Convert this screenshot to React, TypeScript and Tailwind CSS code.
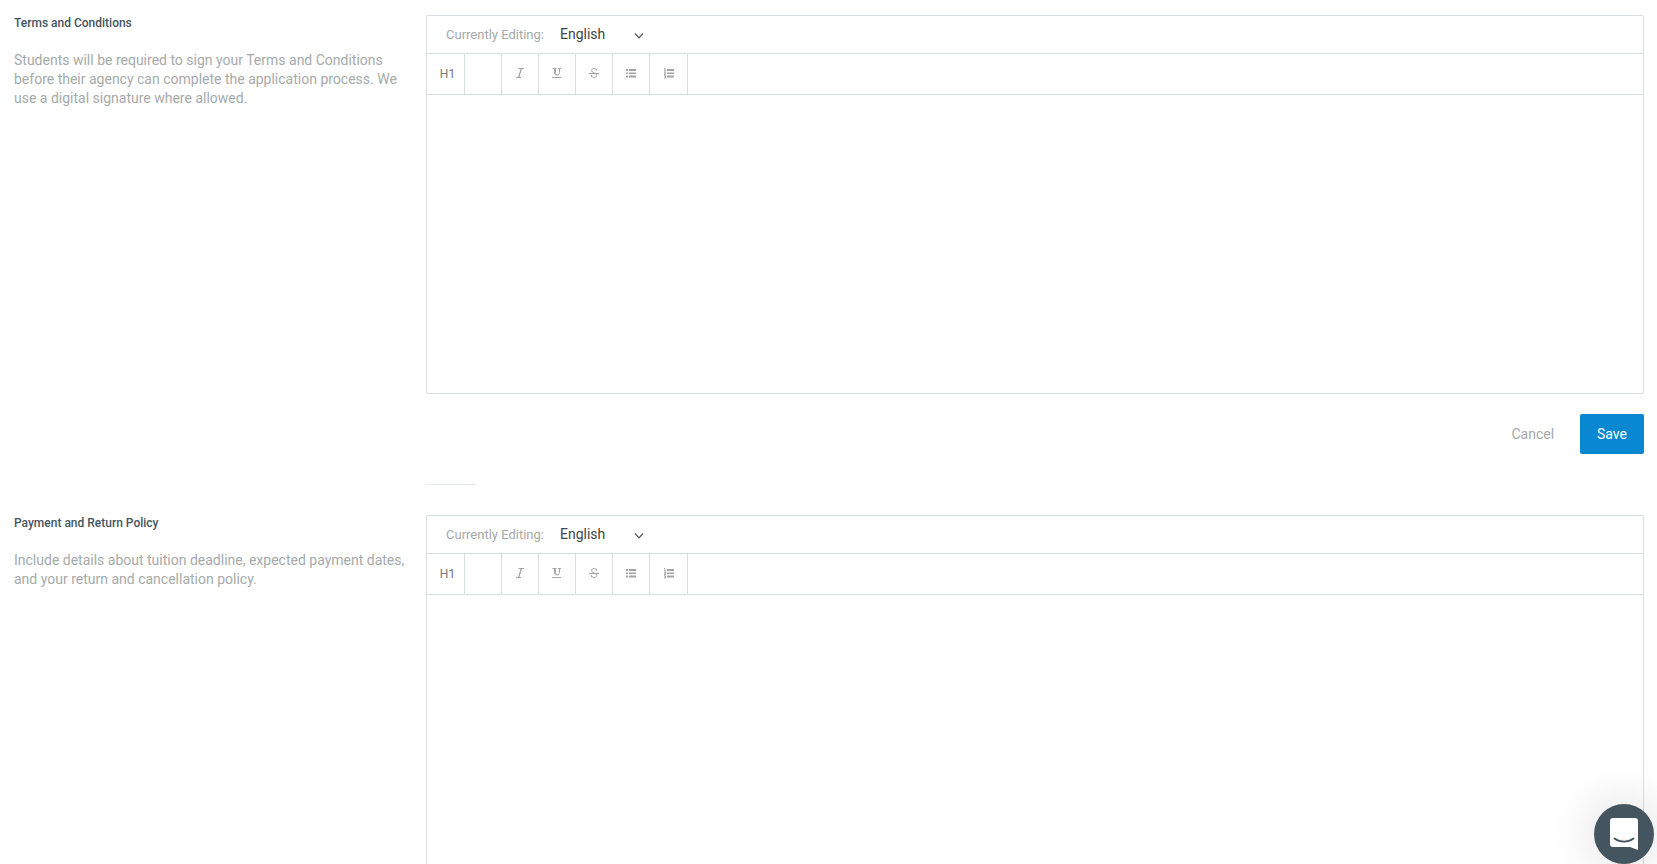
import type { ReactNode } from "react";

function ToolButton({ label, children }: { label: string; children?: ReactNode }) {
  return (
    <button
      type="button"
      aria-label={label}
      className="flex h-10 w-[37px] items-center justify-center border-r border-[#d7dee0] pb-[2px] text-[#a3a3a3] last:w-[38px]"
    >
      {children}
    </button>
  );
}

function Editor({ id, title }: { id: string; title: string }) {
  return (
    <div className="rounded-xs border border-[#d7dee0]">
      <div className="flex h-[38px] items-center border-b border-[#d7dee0] pl-[19px]">
        <label htmlFor={`${id}-language`} className="text-[13px] text-[#a5aaaa]">
          Currently Editing:
        </label>
        <div className="grid items-center pb-[2px] pl-4">
          <select
            id={`${id}-language`}
            defaultValue="en"
            className="col-start-1 row-start-1 w-[88px] appearance-none bg-transparent text-sm text-[#444]"
          >
            <option value="en">English</option>
          </select>
          <svg
            className="pointer-events-none col-start-1 row-start-1 mt-1 mr-1 justify-self-end"
            width="10"
            height="8"
            viewBox="0 0 10 8"
            fill="none"
            stroke="#555"
            strokeWidth="1.2"
            aria-hidden="true"
          >
            <path d="M1 1.5 5 5.8 9 1.5" />
          </svg>
        </div>
      </div>
      <div className="flex h-[41px] border-b border-[#d7dee0]">
        <button
          type="button"
          className="flex h-10 w-[38px] items-center justify-center border-r border-[#d7dee0] pl-1 text-xs text-[#777]"
        >
          H1
        </button>
        <ToolButton label="Bold" />
        <ToolButton label="Italic">
          <svg width="12" height="12" viewBox="0 0 12 12" fill="none" stroke="currentColor">
            <path d="M4.5 1.5H10M2 10.5h5" />
            <path d="M7.4 1.5l-2.8 9" strokeWidth="1.3" />
          </svg>
        </ToolButton>
        <ToolButton label="Underline">
          <svg width="12" height="12" viewBox="0 0 12 12" fill="none" stroke="currentColor">
            <path d="M1.500 1.500h4M7 1.500h3M1 10.500h9" />
            <path d="M3.700 1v4.500c0 1.600.8 2.400 2.300 2.400s2.500-.8 2.500-2.400V1" />
            <path d="M4 1v5.500" strokeWidth="1.800" />
          </svg>
        </ToolButton>
        <ToolButton label="Strikethrough">
          <svg width="12" height="12" viewBox="0 0 12 12" fill="none" stroke="currentColor">
            <path d="M1 6.500h10" />
            <path d="M8.400 3.600V1.800M8.400 3c-.5-1-1.300-1.500-2.400-1.500-1.400 0-2.400.8-2.400 2 0 2.900 5.200 2.200 5.200 4.900 0 1.300-1.100 2.100-2.600 2.100-1.300 0-2.200-.6-2.600-1.800M3.500 8v2" />
          </svg>
        </ToolButton>
        <ToolButton label="Bulleted list">
          <svg width="12" height="12" viewBox="0 0 12 12" fill="currentColor">
            <path d="M1 2h2v2H1zM4 2h7v2H4zM1 5.500h2v1.500H1zM4 5.500h7v1.500H4zM1 8.500h2v2H1zM4 8.500h7v2H4z" />
          </svg>
        </ToolButton>
        <ToolButton label="Numbered list">
          <svg width="12" height="12" viewBox="0 0 12 12" fill="currentColor">
            <path d="M4 2h7v2H4zM4 5.500h7v1.500H4zM4 8.500h7v2H4z" />
            <path
              d="M1 1.500h1V4M1 4h2M1 5.300h1.500v1L1 7.300h2M1 8.600h1.500v2.500H1M1.400 9.800h1"
              fill="none"
              stroke="currentColor"
              strokeWidth=".9"
            />
          </svg>
        </ToolButton>
      </div>
      <textarea
        aria-label={title}
        className="block h-[298px] w-full resize-none p-5 text-sm text-[#444] outline-none"
      />
    </div>
  );
}

type PolicySectionProps = {
  id: string;
  title: string;
  description: string;
  children?: ReactNode;
};

function PolicySection({ id, title, description, children }: PolicySectionProps) {
  return (
    <section className="flex">
      <div className="w-[412px] shrink-0 pr-5">
        <h2 className="text-xs leading-4 font-medium text-[#455560]">{title}</h2>
        <p className="mt-5 text-sm leading-[19px] text-[#a5aaaa]">{description}</p>
      </div>
      <div className="min-w-0 flex-1">
        <Editor id={id} title={title} />
        {children}
      </div>
    </section>
  );
}

function SectionActions() {
  return (
    <>
      <div className="mt-5 flex justify-end gap-2">
        <button type="button" className="h-10 px-[18px] text-sm text-[#a5aaaa]">
          Cancel
        </button>
        <button type="button" className="h-10 rounded-xs bg-[#0a87d1] px-[17px] text-sm text-white">
          Save
        </button>
      </div>
      <hr className="mt-[30px] w-[50px] border-[#e4e9eb]" />
    </>
  );
}

export default function App() {
  return (
    <main className="flex h-screen flex-col gap-[30px] overflow-hidden bg-white pt-[15px] pr-[13px] pl-[14px] font-[Roboto,sans-serif]">
      <PolicySection
        id="terms"
        title="Terms and Conditions"
        description="Students will be required to sign your Terms and Conditions before their agency can complete the application process. We use a digital signature where allowed."
      >
        <SectionActions />
      </PolicySection>
      <PolicySection
        id="payment"
        title="Payment and Return Policy"
        description="Include details about tuition deadline, expected payment dates, and your return and cancellation policy."
      />
      <button
        type="button"
        aria-label="Open chat"
        className="fixed right-[3px] bottom-0 flex size-[60px] items-center justify-center rounded-full bg-[#455560] shadow-[0_0_50px_rgba(0,0,0,0.16)]"
      >
        <svg width="28" height="32" viewBox="0 0 28 32" aria-hidden="true">
          <path d="M3 0h22a3 3 0 0 1 3 3v29l-8-3H3a3 3 0 0 1-3-3V3a3 3 0 0 1 3-3Z" fill="#fff" />
          <path
            d="M4.500 20.500c5.500 4.200 13.500 4.200 19 0"
            fill="none"
            stroke="#455560"
            strokeWidth="1.800"
            strokeLinecap="round"
          />
        </svg>
      </button>
    </main>
  );
}
